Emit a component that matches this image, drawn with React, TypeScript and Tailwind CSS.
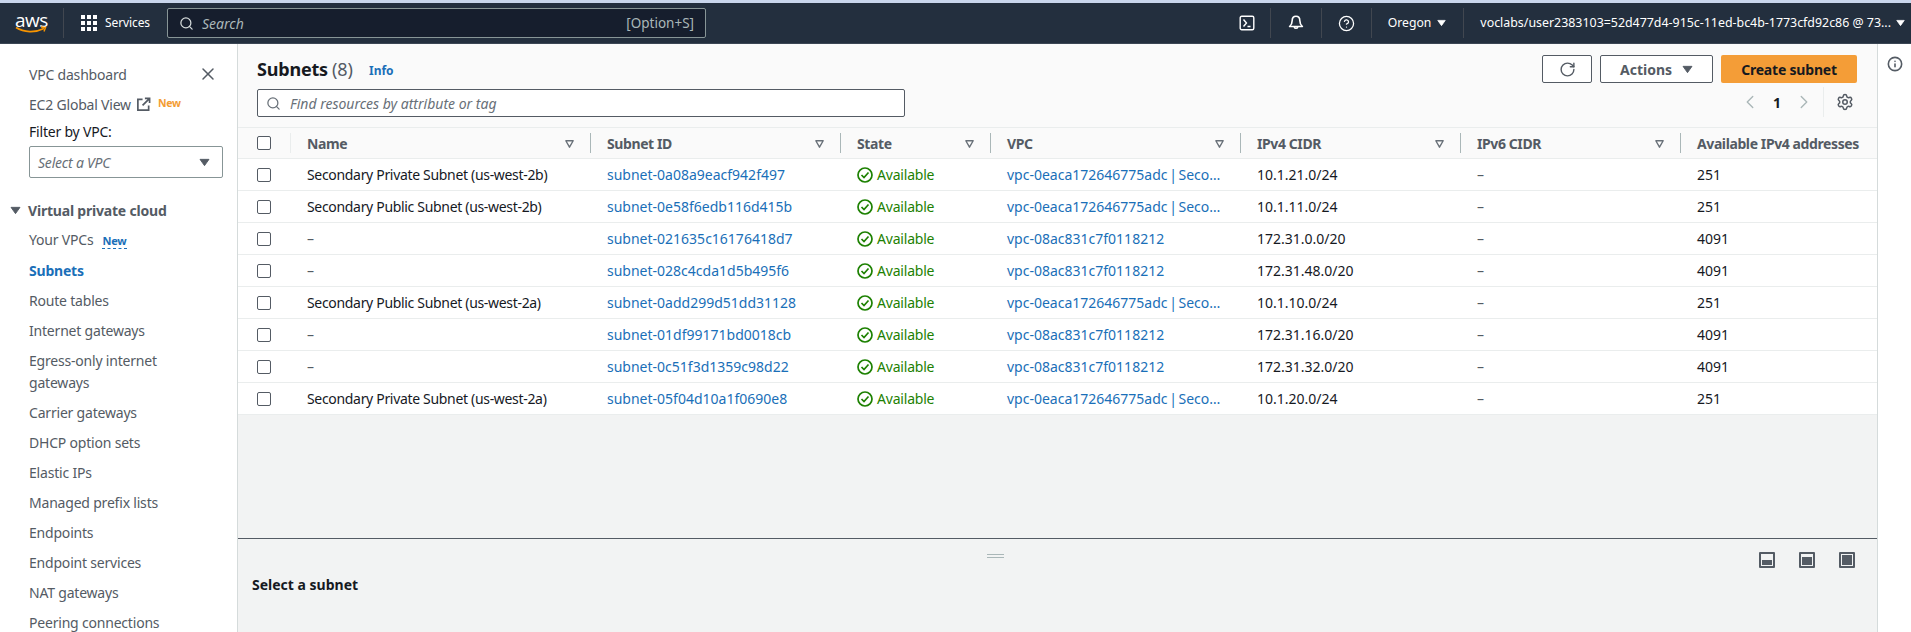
import { RotateCw, Search, ChevronLeft, ChevronRight, Settings, X, CircleHelp, Info } from "lucide-react";

type Row = { name: string; id: string; vpc: string; cidr: string; avail: string };

const rows: Row[] = [
  { name: "Secondary Private Subnet (us-west-2b)", id: "subnet-0a08a9eacf942f497", vpc: "vpc-0eaca172646775adc | Secondary VPC", cidr: "10.1.21.0/24", avail: "251" },
  { name: "Secondary Public Subnet (us-west-2b)", id: "subnet-0e58f6edb116d415b", vpc: "vpc-0eaca172646775adc | Secondary VPC", cidr: "10.1.11.0/24", avail: "251" },
  { name: "–", id: "subnet-021635c16176418d7", vpc: "vpc-08ac831c7f0118212", cidr: "172.31.0.0/20", avail: "4091" },
  { name: "–", id: "subnet-028c4cda1d5b495f6", vpc: "vpc-08ac831c7f0118212", cidr: "172.31.48.0/20", avail: "4091" },
  { name: "Secondary Public Subnet (us-west-2a)", id: "subnet-0add299d51dd31128", vpc: "vpc-0eaca172646775adc | Secondary VPC", cidr: "10.1.10.0/24", avail: "251" },
  { name: "–", id: "subnet-01df99171bd0018cb", vpc: "vpc-08ac831c7f0118212", cidr: "172.31.16.0/20", avail: "4091" },
  { name: "–", id: "subnet-0c51f3d1359c98d22", vpc: "vpc-08ac831c7f0118212", cidr: "172.31.32.0/20", avail: "4091" },
  { name: "Secondary Private Subnet (us-west-2a)", id: "subnet-05f04d10a1f0690e8", vpc: "vpc-0eaca172646775adc | Secondary VPC", cidr: "10.1.20.0/24", avail: "251" },
];

const columns = [
  { label: "Name", w: "w-[300px]" },
  { label: "Subnet ID", w: "w-[250px]" },
  { label: "State", w: "w-[150px]" },
  { label: "VPC", w: "w-[250px]" },
  { label: "IPv4 CIDR", w: "w-[220px]" },
  { label: "IPv6 CIDR", w: "w-[220px]" },
];

const navItems = ["Route tables", "Internet gateways", "Egress-only internet gateways", "Carrier gateways", "DHCP option sets", "Elastic IPs", "Managed prefix lists", "Endpoints", "Endpoint services", "NAT gateways", "Peering connections"];

function Caret({ className }: { className?: string }) {
  return (
    <svg viewBox="0 0 12 10" className={className} fill="currentColor">
      <path d="M1 1.5h10L6 8.5z" stroke="currentColor" strokeLinejoin="round" />
    </svg>
  );
}

function Checkbox() {
  return <span className="block w-[14px] h-[14px] rounded-[2px] border border-[#545b64] bg-white" />;
}

function SortIcon() {
  return (
    <svg viewBox="0 0 12 12" className="w-[11px] h-[11px] text-[#687078] shrink-0" fill="none" stroke="currentColor" strokeWidth="1.5">
      <path d="M2 3h8L6 10z" strokeLinejoin="round" />
    </svg>
  );
}

function NavDivider() {
  return <span className="block w-px h-[30px] bg-[#414750]" />;
}

function PanelIcon({ fill }: { fill: string }) {
  return (
    <span className="relative block w-4 h-4 rounded-[1px] bg-[#545b64] p-[2px]">
      <span className="flex flex-col justify-end w-full h-full bg-[#f2f3f3]">
        <span className={`block w-full bg-[#545b64] border border-[#f2f3f3] ${fill}`} />
      </span>
    </span>
  );
}

function TopNav() {
  return (
    <header className="h-[41px] bg-[#232f3e] flex items-center text-white shrink-0 border-b border-[#3b4654]">
      <div className="w-[63px] pl-[15px] flex flex-col items-start">
        <span className="text-[19px] leading-[14px] tracking-[-0.5px] font-['Open_Sans',sans-serif]">aws</span>
        <svg viewBox="0 0 32 8" className="w-[32px] h-[8px] -mt-[1px]" fill="none">
          <path d="M1 1.5c8 5 19 5.5 28 1" stroke="#f79400" strokeWidth="1.7" />
          <path d="M26 1l4.5.6-1.5 4" stroke="#f79400" strokeWidth="1.4" />
        </svg>
      </div>
      <NavDivider />
      <div className="ml-[17px] grid grid-cols-3 gap-[2px] w-[16px]">
        {Array.from({ length: 9 }).map((_, i) => (
          <span key={i} className="block w-[4px] h-[4px] bg-white" />
        ))}
      </div>
      <span className="ml-2 text-[12px] w-[62px] tracking-[-0.1px]">Services</span>
      <div className="w-[539px] h-[30px] rounded-[2px] border border-[#879596] bg-[#161e2d] flex items-center px-[11px]">
        <Search size={15} strokeWidth={2} className="text-[#d5dbdb]" />
        <span className="ml-[8px] italic text-[14px] text-[#aab7b8]">Search</span>
        <span className="ml-auto text-[13.5px] text-[#aab7b8]">[Option+S]</span>
      </div>
      <div className="ml-auto flex items-center h-full">
        <svg viewBox="0 0 16 16" className="w-4 h-4 mr-[15px]" fill="none" stroke="white" strokeWidth="1.4">
          <rect x="1.2" y="1.2" width="13.6" height="13.6" rx="1.5" />
          <path d="M4.5 4.5 7.5 8l-3 3.5M8.5 11.5h3" />
        </svg>
        <NavDivider />
        <svg viewBox="0 0 16 16" className="w-4 h-4 mx-[17px]" fill="none" stroke="white" strokeWidth="1.6" strokeLinejoin="round">
          <path d="M8 1.2c-2.4 0-3.8 1.9-3.8 4.3 0 3-1 4.6-2.6 6h12.8c-1.6-1.4-2.6-3-2.6-6 0-2.4-1.4-4.3-3.8-4.3z" />
          <path d="M6.2 12a1.9 1.9 0 0 0 3.6 0" />
        </svg>
        <NavDivider />
        <CircleHelp size={17} strokeWidth={1.8} className="mx-[16px]" />
        <NavDivider />
        <span className="ml-[16px] text-[12.2px]">Oregon</span>
        <Caret className="ml-[6px] w-[9px] h-[8px] mr-[17px]" />
        <NavDivider />
        <span className="ml-[16px] text-[12.4px] whitespace-nowrap">voclabs/user2383103=52d477d4-915c-11ed-bc4b-1773cfd92c86 @ 73...</span>
        <Caret className="ml-[5px] w-[9px] h-[8px] mr-[6px]" />
      </div>
    </header>
  );
}

function Sidebar() {
  return (
    <aside className="w-[238px] shrink-0 bg-white border-r border-[#d5dbdb] pl-[29px] text-[14px] tracking-[-0.2px] text-[#545b64] overflow-hidden">
      <div className="h-[22px] mt-[19px] flex items-center justify-between pr-[19px]">
        <span>VPC dashboard</span>
        <X size={20} strokeWidth={1.8} className="text-[#545b64]" />
      </div>
      <div className="h-[22px] mt-[8px] flex items-center whitespace-nowrap">
        <span>EC2 Global View</span>
        <svg viewBox="0 0 16 16" className="w-[15px] h-[15px] ml-[5px]" fill="none" stroke="currentColor" strokeWidth="1.8">
          <path d="M7 2.5H2v11.5h11.5V9M9.5 1.5h5v5M14.5 1.5 7 9" />
        </svg>
        <span className="ml-[7px] text-[10.5px] font-bold text-[#f39c33]">New</span>
      </div>
      <div className="h-[20px] mt-[6px] flex items-center text-[#16191f]">Filter by VPC:</div>
      <div className="mt-[5px] mr-[14px] h-[32px] rounded-[2px] border border-[#879596] flex items-center pl-[8px] pr-[12px] italic text-[#687078]">
        Select a VPC
        <Caret className="ml-auto w-[11px] h-[9px] text-[#545b64]" />
      </div>
      <div className="relative mt-[21px] h-[22px] flex items-center font-bold">
        <Caret className="absolute -left-[19px] top-[7px] w-[11px] h-[9px]" />
        <span className="-ml-[1px]">Virtual private cloud</span>
      </div>
      <ul className="mt-[8px] pr-[40px]">
        <li className="leading-[22px] pb-[8px] whitespace-nowrap">
          Your VPCs
          <span className="ml-[9px] text-[11px] font-bold text-[#1a6fb8] border-b border-dashed border-[#1a6fb8]">New</span>
        </li>
        <li className="leading-[22px] pb-[8px] font-bold text-[#1a6fb8]">Subnets</li>
        {navItems.map((n) => (
          <li key={n} className="leading-[22px] pb-[8px]">{n}</li>
        ))}
      </ul>
    </aside>
  );
}

function SubnetTable() {
  return (
    <table className="table-fixed w-full border-collapse text-[14px] bg-white">
      <colgroup>
        <col className="w-[53px]" />
        {columns.map((c) => (
          <col key={c.label} className={c.w} />
        ))}
        <col />
      </colgroup>
      <thead className="bg-[#fafafa]">
        <tr className="h-[31px] border-t border-b border-[#eaeded]">
          <th className="p-0">
            <div className="flex items-center pl-[19px] h-[20px] border-r border-[#eaeded]">
              <Checkbox />
            </div>
          </th>
          {columns.map((c) => (
            <th key={c.label} className="p-0 font-bold text-left text-[#545b64] tracking-[-0.4px]">
              <div className="flex items-center h-[20px] pl-[16px] pr-[15px] border-r border-[#aab7b8]">
                <span className="flex-1">{c.label}</span>
                <SortIcon />
              </div>
            </th>
          ))}
          <th className="p-0 font-bold text-left text-[#545b64] pl-[16px] whitespace-nowrap tracking-[-0.4px]">Available IPv4 addresses</th>
        </tr>
      </thead>
      <tbody>
        {rows.map((r) => (
          <tr key={r.id} className="h-[32px] border-b border-[#eaeded]">
            <td className="p-0 pl-[19px]">
              <Checkbox />
            </td>
            <td className={`p-0 pl-[16px] truncate tracking-[-0.32px] ${r.name === "–" ? "text-[#545b64]" : "text-[#16191f]"}`}>{r.name}</td>
            <td className="p-0 pl-[16px] text-[#1a6fb8] truncate">{r.id}</td>
            <td className="p-0 pl-[16px] text-[#1d8102]">
              <span className="flex items-center gap-[4px] tracking-[-0.2px]">
                <svg viewBox="0 0 16 16" className="w-[16px] h-[16px]" fill="none" stroke="currentColor" strokeWidth="1.7">
                  <circle cx="8" cy="8" r="7" />
                  <path d="M4.5 8l2.5 2.5 4.5-5" />
                </svg>
                Available
              </span>
            </td>
            <td className="p-0 pl-[16px] pr-[16px] text-[#1a6fb8] truncate [word-spacing:-2px]">{r.vpc}</td>
            <td className="p-0 pl-[16px] text-[#16191f]">{r.cidr}</td>
            <td className="p-0 pl-[16px] text-[#545b64]">–</td>
            <td className="p-0 pl-[16px] text-[#16191f]">{r.avail}</td>
          </tr>
        ))}
      </tbody>
    </table>
  );
}

function MainArea() {
  return (
    <main className="flex-1 min-w-0 flex flex-col bg-[#f2f3f3]">
      <div className="flex-1 min-h-0 flex flex-col">
        <div className="h-[83px] bg-[#fafafa] pl-[19px] pr-[20px] shrink-0 flex">
          <div className="flex-1 pt-[13px]">
            <div className="flex items-center h-[24px]">
              <h1 className="text-[18px] font-bold text-[#16191f] tracking-[-0.2px]">Subnets</h1>
              <span className="ml-[4px] text-[18px] text-[#545b64]">(8)</span>
              <span className="ml-[16px] mt-[3px] text-[12px] font-bold text-[#1a6fb8]">Info</span>
            </div>
            <div className="mt-[8px] w-[648px] h-[28px] rounded-[2px] border border-[#545b64] bg-white flex items-center px-[8px]">
              <Search size={15} strokeWidth={2} className="text-[#687078]" />
              <span className="ml-[9px] italic text-[14px] text-[#687078]">Find resources by attribute or tag</span>
            </div>
          </div>
          <div className="flex flex-col items-end pt-[11px]">
            <div className="flex gap-[8px]">
              <button className="w-[50px] h-[28px] rounded-[2px] border border-[#545b64] bg-white flex items-center justify-center text-[#545b64]">
                <RotateCw size={17} strokeWidth={2} />
              </button>
              <button className="w-[113px] h-[28px] rounded-[2px] border border-[#545b64] bg-white flex items-center justify-center gap-[10px] text-[14px] font-bold text-[#545b64]">
                Actions
                <Caret className="w-[11px] h-[9px]" />
              </button>
              <button className="w-[136px] h-[28px] rounded-[2px] bg-[#f49d37] text-[14px] font-bold text-[#16191f] tracking-[-0.2px]">Create subnet</button>
            </div>
            <div className="flex items-center h-[30px] mt-[4px] text-[#16191f] mr-[3px]">
              <ChevronLeft size={22} strokeWidth={1.5} className="text-[#aab7b8]" />
              <span className="mx-[12px] text-[14px] font-bold">1</span>
              <ChevronRight size={22} strokeWidth={1.5} className="text-[#aab7b8]" />
              <span className="ml-[8px] block w-px h-[30px] bg-[#eaeded]" />
              <Settings size={18} strokeWidth={2} className="ml-[12px] text-[#545b64]" />
            </div>
          </div>
        </div>
        <SubnetTable />
      </div>
      <div className="h-[94px] shrink-0 border-t border-[#545b64] flex flex-col relative pl-[14px]">
        <div className="absolute left-[749px] top-[15px] w-[17px] h-[4px] border-t border-b border-[#aab7b8]" />
        <div className="absolute right-[22px] top-[13px] flex gap-[24px]">
          <PanelIcon fill="h-[7px]" />
          <PanelIcon fill="h-[10px]" />
          <PanelIcon fill="h-full" />
        </div>
        <span className="mt-[35px] text-[14px] font-bold text-[#16191f]">Select a subnet</span>
      </div>
    </main>
  );
}

export default function App() {
  return (
    <div className="h-[632px] w-[1911px] overflow-hidden flex flex-col font-['Noto_Sans',sans-serif]">
      <div className="h-[3px] bg-[#c9d6ec] shrink-0" />
      <TopNav />
      <div className="flex-1 min-h-0 flex">
        <Sidebar />
        <MainArea />
        <aside className="w-[34px] shrink-0 bg-white border-l border-[#d5dbdb] flex justify-center pt-[12px]">
          <Info size={16} strokeWidth={2.4} className="text-[#545b64]" />
        </aside>
      </div>
    </div>
  );
}
